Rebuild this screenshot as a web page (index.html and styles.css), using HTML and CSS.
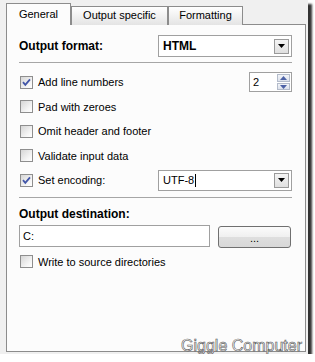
FILE: index.html
```html
<!DOCTYPE html>
<html lang="en">
<head>
    <meta charset="UTF-8">
    <meta name="viewport" content="width=device-width, initial-scale=1.0">
    <title>Options</title>
    <link rel="stylesheet" href="styles.css">
</head>
<body>
    <div class="window">
        <div class="tabs">
            <div class="tab active">General</div>
            <div class="tab tab-output">Output specific</div>
            <div class="tab tab-format">Formatting</div>
        </div>
        <div class="panel">
            <div class="format-row">
                <span class="heading">Output format:</span>
                <div class="combo combo-bold">
                    <span class="combo-text">HTML</span>
                    <span class="drop-btn"><svg width="7" height="4" viewBox="0 0 7 4"><polygon points="0,0 7,0 3.5,4" fill="#000"/></svg></span>
                </div>
            </div>
            <div class="sep"></div>

            <div class="checks">
                <div class="check-row">
                    <span class="box"><svg width="11" height="11" viewBox="0 0 11 11"><path d="M2 5.2 L4.3 7.8 L9 2.4" fill="none" stroke="#4256a8" stroke-width="1.8"/></svg></span>
                    <span class="label">Add line numbers</span>
                    <div class="spinner">
                        <span class="spin-value">2</span>
                        <div class="spin-btns">
                            <span class="spin-btn"><svg width="7" height="4" viewBox="0 0 7 4"><polygon points="0,4 7,4 3.5,0" fill="#4d62a6"/></svg></span>
                            <span class="spin-btn"><svg width="7" height="4" viewBox="0 0 7 4"><polygon points="0,0 7,0 3.5,4" fill="#4d62a6"/></svg></span>
                        </div>
                    </div>
                </div>
                <div class="check-row">
                    <span class="box"></span>
                    <span class="label">Pad with zeroes</span>
                </div>
                <div class="check-row">
                    <span class="box"></span>
                    <span class="label">Omit header and footer</span>
                </div>
                <div class="check-row">
                    <span class="box"></span>
                    <span class="label">Validate input data</span>
                </div>
                <div class="check-row">
                    <span class="box"><svg width="11" height="11" viewBox="0 0 11 11"><path d="M2 5.2 L4.3 7.8 L9 2.4" fill="none" stroke="#4256a8" stroke-width="1.8"/></svg></span>
                    <span class="label">Set encoding:</span>
                    <div class="combo combo-enc">
                        <span class="combo-text">UTF-8<span class="caret"></span></span>
                        <span class="drop-btn"><svg width="7" height="4" viewBox="0 0 7 4"><polygon points="0,0 7,0 3.5,4" fill="#000"/></svg></span>
                    </div>
                </div>
            </div>
            <div class="sep sep-low"></div>

            <div class="heading dest-title">Output destination:</div>
            <div class="dest-row">
                <div class="text-field">C:</div>
                <button class="browse-btn">...</button>
            </div>
            <div class="check-row write-row">
                <span class="box"></span>
                <span class="label">Write to source directories</span>
            </div>
        </div>
        <div class="watermark">Giggle Computer</div>
    </div>
</body>
</html>
```

FILE: styles.css
```css
* {
    margin: 0;
    padding: 0;
    box-sizing: border-box;
}

body {
    background: #fff;
    font-family: "Liberation Sans", Arial, sans-serif;
    font-size: 11px;
    color: #000;
}

.window {
    position: relative;
    width: 308px;
    height: 354px;
    padding: 3px 0 0 6px;
    background: #f0f0f0;
    box-shadow: 4px 4px 2px rgba(0, 0, 0, 0.8);
}

/* tab strip */
.tabs {
    display: flex;
    align-items: flex-end;
    height: 22px;
    margin-bottom: -1px;
}

.tab {
    height: 19px;
    border: 1px solid #8c8c8c;
    border-bottom: 0;
    background: linear-gradient(#ffffff, #e4e4e4);
    text-align: center;
    line-height: 17px;
}

.tab.active {
    position: relative;
    z-index: 1;
    width: 65px;
    height: 22px;
    line-height: 21px;
    background: #fcfcfc;
}

.tab-output {
    width: 97px;
}

.tab-format {
    width: 75px;
}

/* page body */
.panel {
    width: 300px;
    height: 328px;
    padding: 10px 13px 0 12px;
    border: 1px solid #8c8c8c;
    background: #fcfcfc;
}

.heading {
    font-size: 12px;
    font-weight: bold;
    line-height: 14px;
}

.format-row {
    display: flex;
    align-items: center;
    height: 22px;
}

.format-row .heading {
    width: 139px;
}

.combo {
    display: flex;
    align-items: center;
    justify-content: space-between;
    width: 134px;
    height: 22px;
    padding: 2px;
    border: 1px solid #a0a0a0;
    background: #fff;
}

.combo-text {
    display: flex;
    align-items: center;
    padding-left: 2px;
    font-size: 11px;
}

.combo-bold .combo-text {
    font-size: 12px;
    font-weight: bold;
}

.combo-enc {
    height: 21px;
    margin-left: auto;
}

.caret {
    display: inline-block;
    width: 1px;
    height: 13px;
    margin-left: 1px;
    background: #000;
}

.drop-btn {
    display: flex;
    align-items: center;
    justify-content: center;
    width: 15px;
    height: 15px;
    border: 1px solid #9a9a9a;
    background: linear-gradient(#f4f4f4, #e0e0e0);
}

.sep {
    height: 1px;
    margin-top: 5px;
    background: #a6a6a6;
}

.sep-low {
    margin-top: 4px;
}

/* checkboxes */
.checks {
    margin-top: 7px;
}

.check-row {
    display: flex;
    align-items: center;
    height: 24.5px;
    padding-left: 1px;
}

.box {
    display: flex;
    align-items: center;
    justify-content: center;
    width: 13px;
    height: 13px;
    margin-right: 5px;
    border: 1px solid #8e8e8e;
    background: linear-gradient(135deg, #d6d6d6, #f6f6f6 70%, #ffffff);
}

.label {
    font-size: 11px;
}

.spinner {
    display: flex;
    justify-content: space-between;
    width: 43px;
    height: 20px;
    margin-left: auto;
    padding: 1px;
    border: 1px solid #a0a0a0;
    background: #fff;
}

.spin-value {
    padding: 2px 0 0 2px;
    font-size: 11px;
}

.spin-btns {
    display: flex;
    flex-direction: column;
    gap: 1px;
    width: 13px;
}

.spin-btn {
    display: flex;
    align-items: center;
    justify-content: center;
    flex: 1;
    border: 1px solid #b4bccb;
    background: linear-gradient(#f2f4f8, #dde2ec);
}

/* destination */
.dest-title {
    margin-top: 9px;
}

.dest-row {
    display: flex;
    gap: 8px;
    margin-top: 4px;
}

.text-field {
    width: 191px;
    height: 22px;
    padding: 4px 0 0 3px;
    border: 1px solid #a0a0a0;
    background: #fff;
    font-size: 11px;
}

.browse-btn {
    width: 73px;
    height: 22px;
    margin-top: 1px;
    border: 1px solid #707070;
    border-radius: 3px;
    background: linear-gradient(#fbfbfb 0%, #f0f0f0 48%, #dedede 52%, #d8d8d8 100%);
    font-family: "Liberation Sans", Arial, sans-serif;
    font-size: 11px;
    color: #000;
    padding-top: 2px;
}

.write-row {
    margin-top: 2px;
    height: 24px;
}

.watermark {
    position: absolute;
    top: 338px;
    right: 6px;
    font-size: 16px;
    line-height: 16px;
    color: #fff;
    -webkit-text-stroke: 0.6px #555;
}
```
